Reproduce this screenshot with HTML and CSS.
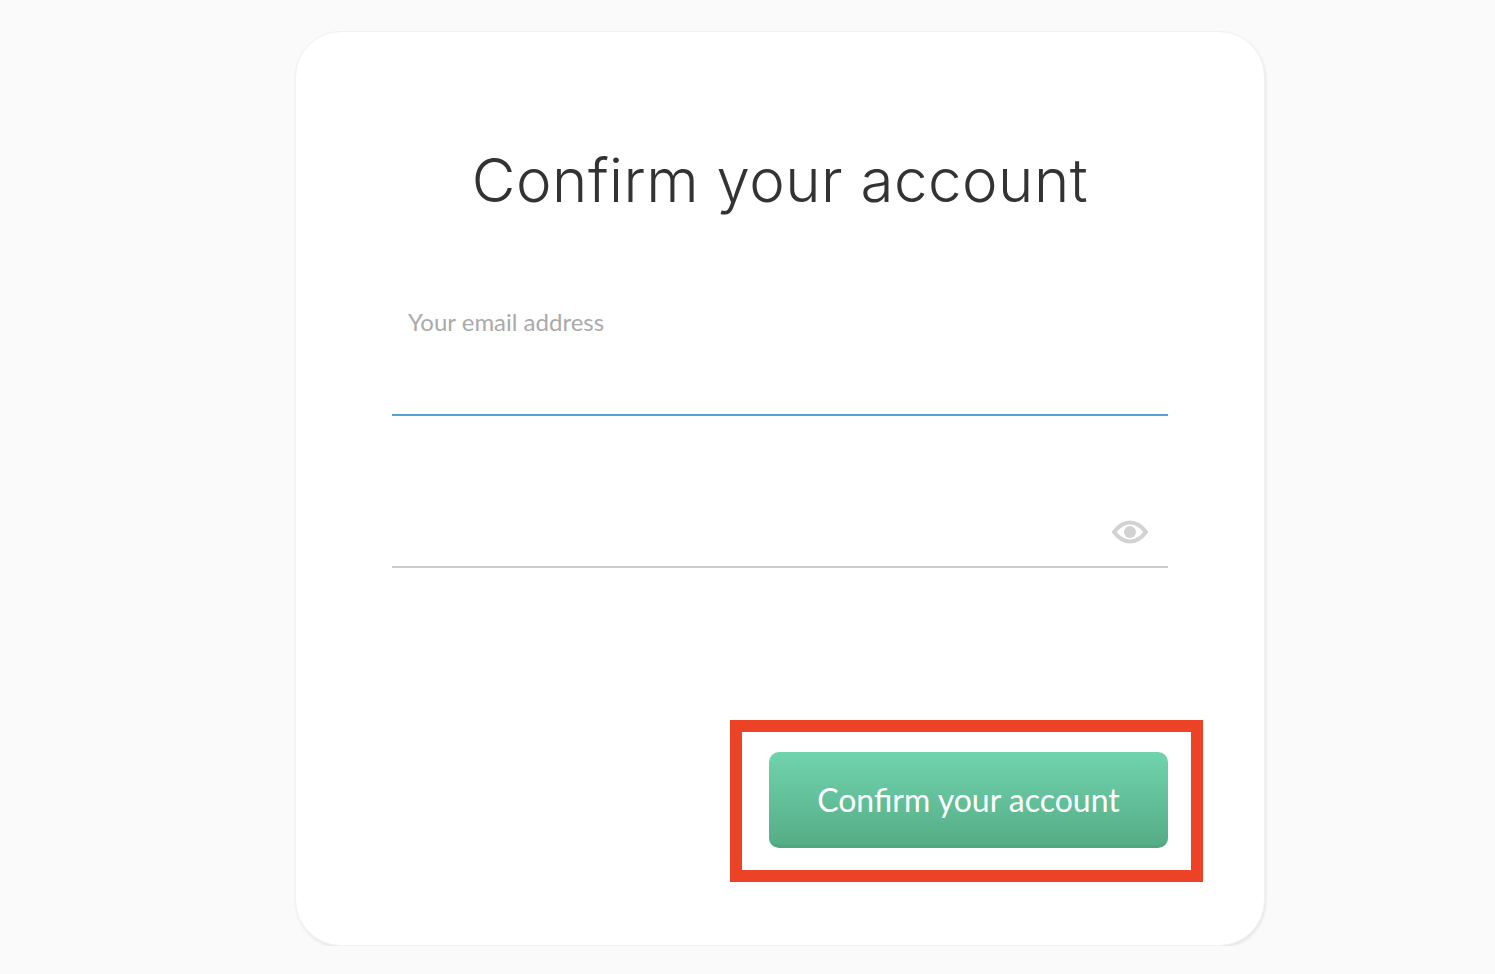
FILE: index.html
```html
<!DOCTYPE html>
<html lang="en">

<head>
    <meta charset="UTF-8">
    <meta name="viewport" content="width=device-width, initial-scale=1.0">
    <title>Confirm your account</title>
    <link rel="stylesheet" href="styles.css">
</head>

<body>
    <div class="card">
        <h1 class="card__title">Confirm your account</h1>
        <form class="confirm-form">
            <div class="field field--active">
                <label class="field__label" for="email">Your email address</label>
                <input class="field__input" type="text" id="email">
            </div>
            <div class="field field--code">
                <input class="field__input" type="text" id="code" aria-label="Confirmation code">
                <svg class="field__eye" viewBox="0 0 36 24" aria-hidden="true">
                    <path d="M2 12C7 5.500 12 2.500 18 2.500s11 3 16 9.500c-5 6.500-10 9.500-16 9.500S7 18.500 2 12z" fill="none" stroke="#d2d2d2" stroke-width="4" stroke-linejoin="round" />
                    <circle cx="18" cy="12" r="6" fill="#d2d2d2" />
                </svg>
            </div>
            <div class="form-actions">
                <button class="submit-button" type="button">Confirm your account</button>
                <!-- red annotation round the button -->
                <span class="highlight-box"></span>
            </div>
        </form>
    </div>
</body>

</html>
```

FILE: styles.css
```css
body {
    margin: 0;
    background-color: #fafafa;
    font-family: "Lato", "Liberation Sans", sans-serif;
    overflow: hidden;
}

.card {
    box-sizing: border-box;
    width: 970px;
    height: 915px;
    margin: 31px 0 0 295px;
    padding: 0 96px;
    background-color: #ffffff;
    border: 1px solid #f1f1f1;
    border-radius: 46px;
    box-shadow: 1px 2px 3px #e6e6e6;
}

.card__title {
    margin: 0;
    padding-top: 116px;
    height: 64px;
    line-height: 64px;
    text-align: center;
    font-family: "Inter", "Open Sans", sans-serif;
    font-size: 60px;
    font-weight: 300;
    letter-spacing: 0.5px;
    color: #333333;
    box-sizing: content-box;
}

.field {
    position: relative;
    border-bottom: 2px solid #cccccc;
}

.field--active {
    height: 107px;
    margin-top: 95px;
    border-bottom-color: #53a3d6;
}

.field--code {
    height: 100px;
    margin-top: 50px;
}

.field__label {
    display: block;
    padding: 0 0 0 16px;
    font-size: 24px;
    line-height: 30px;
    color: #aaaaaa;
}

.field__input {
    position: absolute;
    left: 0;
    right: 0;
    bottom: 0;
    height: 48px;
    border: none;
    outline: 0;
    background: transparent;
}

.field__eye {
    position: absolute;
    right: 20px;
    bottom: 21px;
    width: 36px;
    height: 26px;
}

.form-actions {
    position: relative;
    display: flex;
    justify-content: flex-end;
    margin-top: 184px;
}

.submit-button {
    box-sizing: border-box;
    width: 399px;
    height: 96px;
    padding: 2px 0 0;
    border: none;
    border-bottom: 3px solid #4fa680;
    border-radius: 10px;
    background: linear-gradient(to bottom, #70d4af, #55ad85);
    font-family: inherit;
    font-size: 32px;
    color: #ffffff;
    cursor: pointer;
}

.highlight-box {
    position: absolute;
    top: -32px;
    right: -35px;
    width: 473px;
    height: 162px;
    box-sizing: border-box;
    border: 12px solid #ec4225;
    pointer-events: none;
}
```
